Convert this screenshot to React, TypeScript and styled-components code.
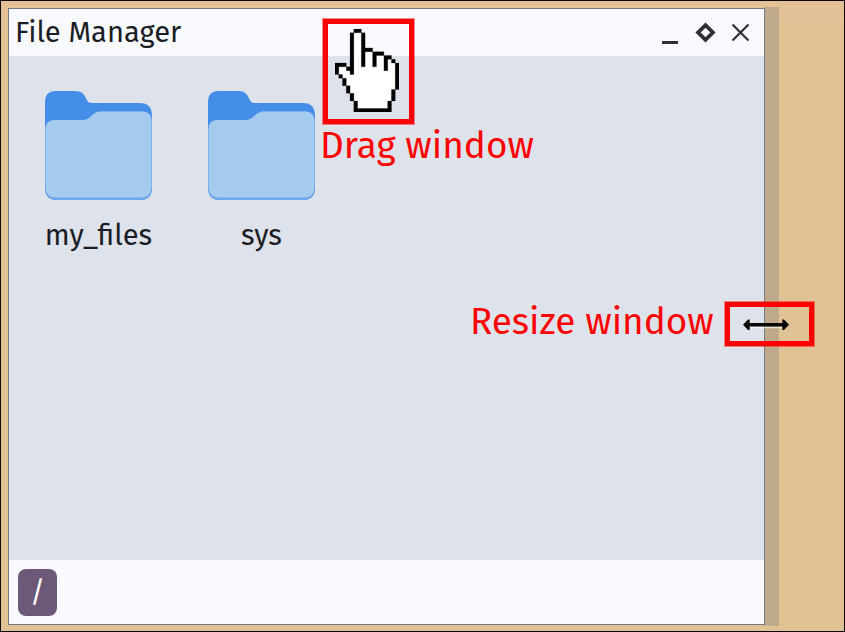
import React from "react";
import styled, { createGlobalStyle } from "styled-components";

const GlobalStyle = createGlobalStyle`
  * { box-sizing: border-box; }
  html, body { margin: 0; padding: 0; overflow: hidden; }
  body { font-family: "Fira Sans", "Noto Sans", sans-serif; color: #1b1d24; }
  svg { display: block; }
`;

const Desktop = styled.main`
  position: relative;
  width: 845px;
  height: 632px;
  display: flex;
  padding: 7px 0 0 7px;
  border: 1px solid #0a0a0a;
  background: linear-gradient(#e5c097 0, #e1c295 24px);
`;

const Window = styled.section`
  width: 757px;
  height: 617px;
  display: flex;
  flex-direction: column;
  border: 1px solid #747a88;
  background: #dee2ea;
`;

const ResizeHandle = styled.div`
  width: 15px;
  height: 619px;
  margin: -1px 0 0 -1px;
  background: rgba(125, 125, 120, 0.35);
`;

const TitleBar = styled.header`
  height: 47px;
  flex: none;
  display: flex;
  align-items: flex-start;
  justify-content: space-between;
  padding: 4px 12px 0 6px;
  background: #f8faff;
`;

const Label = styled.span<{ $size: number }>`
  display: block;
  font-size: ${(p) => p.$size}px;
  line-height: 40px;
  white-space: nowrap;
`;

const Controls = styled.div`
  display: flex;
  align-items: center;
  gap: 11px;
  padding-top: 7px;
`;

const ControlButton = styled.button`
  width: 24px;
  height: 24px;
  padding: 0;
  border: 0;
  background: transparent;
`;

const Files = styled.div`
  flex: 1;
  display: flex;
  align-items: flex-start;
  gap: 56px;
  padding: 35px 36px;
`;

const FileItem = styled.div`
  width: 107px;
  display: flex;
  flex-direction: column;
  align-items: center;
  gap: 16px;
`;

const PathBar = styled.footer`
  height: 64px;
  flex: none;
  display: flex;
  align-items: flex-start;
  padding: 9px;
  background: #f8faff;
`;

const PathButton = styled.button`
  width: 39px;
  height: 47px;
  padding: 0;
  border: 0;
  border-radius: 8px;
  background: #6c5879;
  color: #fff;
  font: 29px/44px "Fira Sans", "Noto Sans", sans-serif;
`;

const Highlight = styled.div<{ $x: number; $y: number; $w: number; $h: number }>`
  position: absolute;
  left: ${(p) => p.$x - 1}px;
  top: ${(p) => p.$y - 1}px;
  width: ${(p) => p.$w}px;
  height: ${(p) => p.$h}px;
  border: 5px solid #ff0000;
  box-shadow: 0 0 0 1px rgba(255, 0, 0, 0.45);
`;

const Note = styled.div<{ $x: number; $y: number }>`
  position: absolute;
  left: ${(p) => p.$x - 1}px;
  top: ${(p) => p.$y - 1}px;
  color: #ff0000;
`;

const Pointer = styled.svg<{ $x: number; $y: number }>`
  position: absolute;
  left: ${(p) => p.$x - 1}px;
  top: ${(p) => p.$y - 1}px;
`;

const HAND = [
  ".....##..........",
  "....#oo#.........",
  "....#oo#.........",
  "....#oo#.........",
  "....#oo#.........",
  "....#oo###.......",
  "....#oo#oo###....",
  "....#oo#oo#oo##..",
  "....#oo#oo#oo#o#.",
  "###.#oo#oo#oo#oo#",
  "#oo##oooooooo#oo#",
  "#ooo#ooooooooooo#",
  ".#oooooooooooooo#",
  "..#ooooooooooooo#",
  "..#ooooooooooooo#",
  "...#oooooooooooo#",
  "...#ooooooooooo#.",
  "....#oooooooooo#.",
  "....#oooooooooo#.",
  ".....#oooooooo#..",
  ".....#oooooooo#..",
  ".....##########..",
];

const cells = (mark: string) =>
  HAND.map((row, y) =>
    [...row].map((c, x) => (c === mark ? `M${x} ${y}h1v1h-1z` : "")).join("")
  ).join("");

function HandPointer() {
  return (
    <Pointer $x={335} $y={29} width="64" height="83.3" viewBox="0 0 17 22"
      preserveAspectRatio="none">
      <path d={cells("o")} fill="#fff" stroke="#fff" strokeWidth=".15" />
      <path d={cells("#")} fill="#000" stroke="#000" strokeWidth=".06" />
    </Pointer>
  );
}

function ResizePointer() {
  return (
    <Pointer $x={742} $y={317} width="50" height="16" viewBox="0 0 50 16">
      <path d="M7 10.5h35" stroke="#fff" strokeOpacity=".65" strokeWidth="1.5" />
      <path d="M1 7.8 6 2.5h1.7v3.6h32.6V2.5H42l5 5.3-5 5.3h-1.7V9.5H7.7v3.6H6z" fill="#090909" />
    </Pointer>
  );
}

function FolderIcon() {
  return (
    <svg width="107" height="109" viewBox="0 0 107 109">
      <path d="M0 11Q0 0 11 0H30C43 0 39 12 47 12H95Q107 12 107 25V97Q107 109 95 109H12Q0 109 0 97Z" fill="#448ee8" />
      <path d="M0 38Q0 29 10 29H38C46 29 47 20.5 56 20.5H97Q107 20.5 107 30V96Q107 109 95 109H12Q0 109 0 96Z" fill="#6da7ec" />
      <path d="M.7 38Q.7 29 10 29H38C46 29 47 20.5 56 20.5H97Q106.3 20.5 106.3 30V97Q106 106.5 96 106.5H11Q1 106.5 .7 97Z" fill="#a4caee" />
    </svg>
  );
}

export default function App() {
  return (
    <>
      <GlobalStyle />
      <Desktop>
        <Window>
          <TitleBar>
            <Label $size={29.1}>File Manager</Label>
            <Controls>
              <ControlButton aria-label="Minimize">
                <svg width="24" height="24"><path d="M4 21h16v3H4z" fill="#2f3036" /></svg>
              </ControlButton>
              <ControlButton aria-label="Maximize">
                <svg width="24" height="24"><path d="m12.5 5.1 7.4 7.4-7.4 7.4-7.4-7.4z" fill="none" stroke="#2f3036" strokeWidth="3.8" /></svg>
              </ControlButton>
              <ControlButton aria-label="Close">
                <svg width="24" height="24"><path d="m4.5 4.5 16 16m0-16-16 16" stroke="#2f3036" strokeWidth="2.2" /></svg>
              </ControlButton>
            </Controls>
          </TitleBar>
          <Files>
            <FileItem><FolderIcon /><Label $size={29.1}>my_files</Label></FileItem>
            <FileItem><FolderIcon /><Label $size={29.1}>sys</Label></FileItem>
          </Files>
          <PathBar><PathButton>/</PathButton></PathBar>
        </Window>
        <ResizeHandle />
        <Highlight $x={323} $y={19} $w={91} $h={105} />
        <HandPointer />
        <Note $x={320} $y={126}><Label $size={36.9}>Drag window</Label></Note>
        <Highlight $x={725} $y={302} $w={89} $h={44} />
        <ResizePointer />
        <Note $x={470} $y={302}><Label $size={36.9}>Resize window</Label></Note>
      </Desktop>
    </>
  );
}
